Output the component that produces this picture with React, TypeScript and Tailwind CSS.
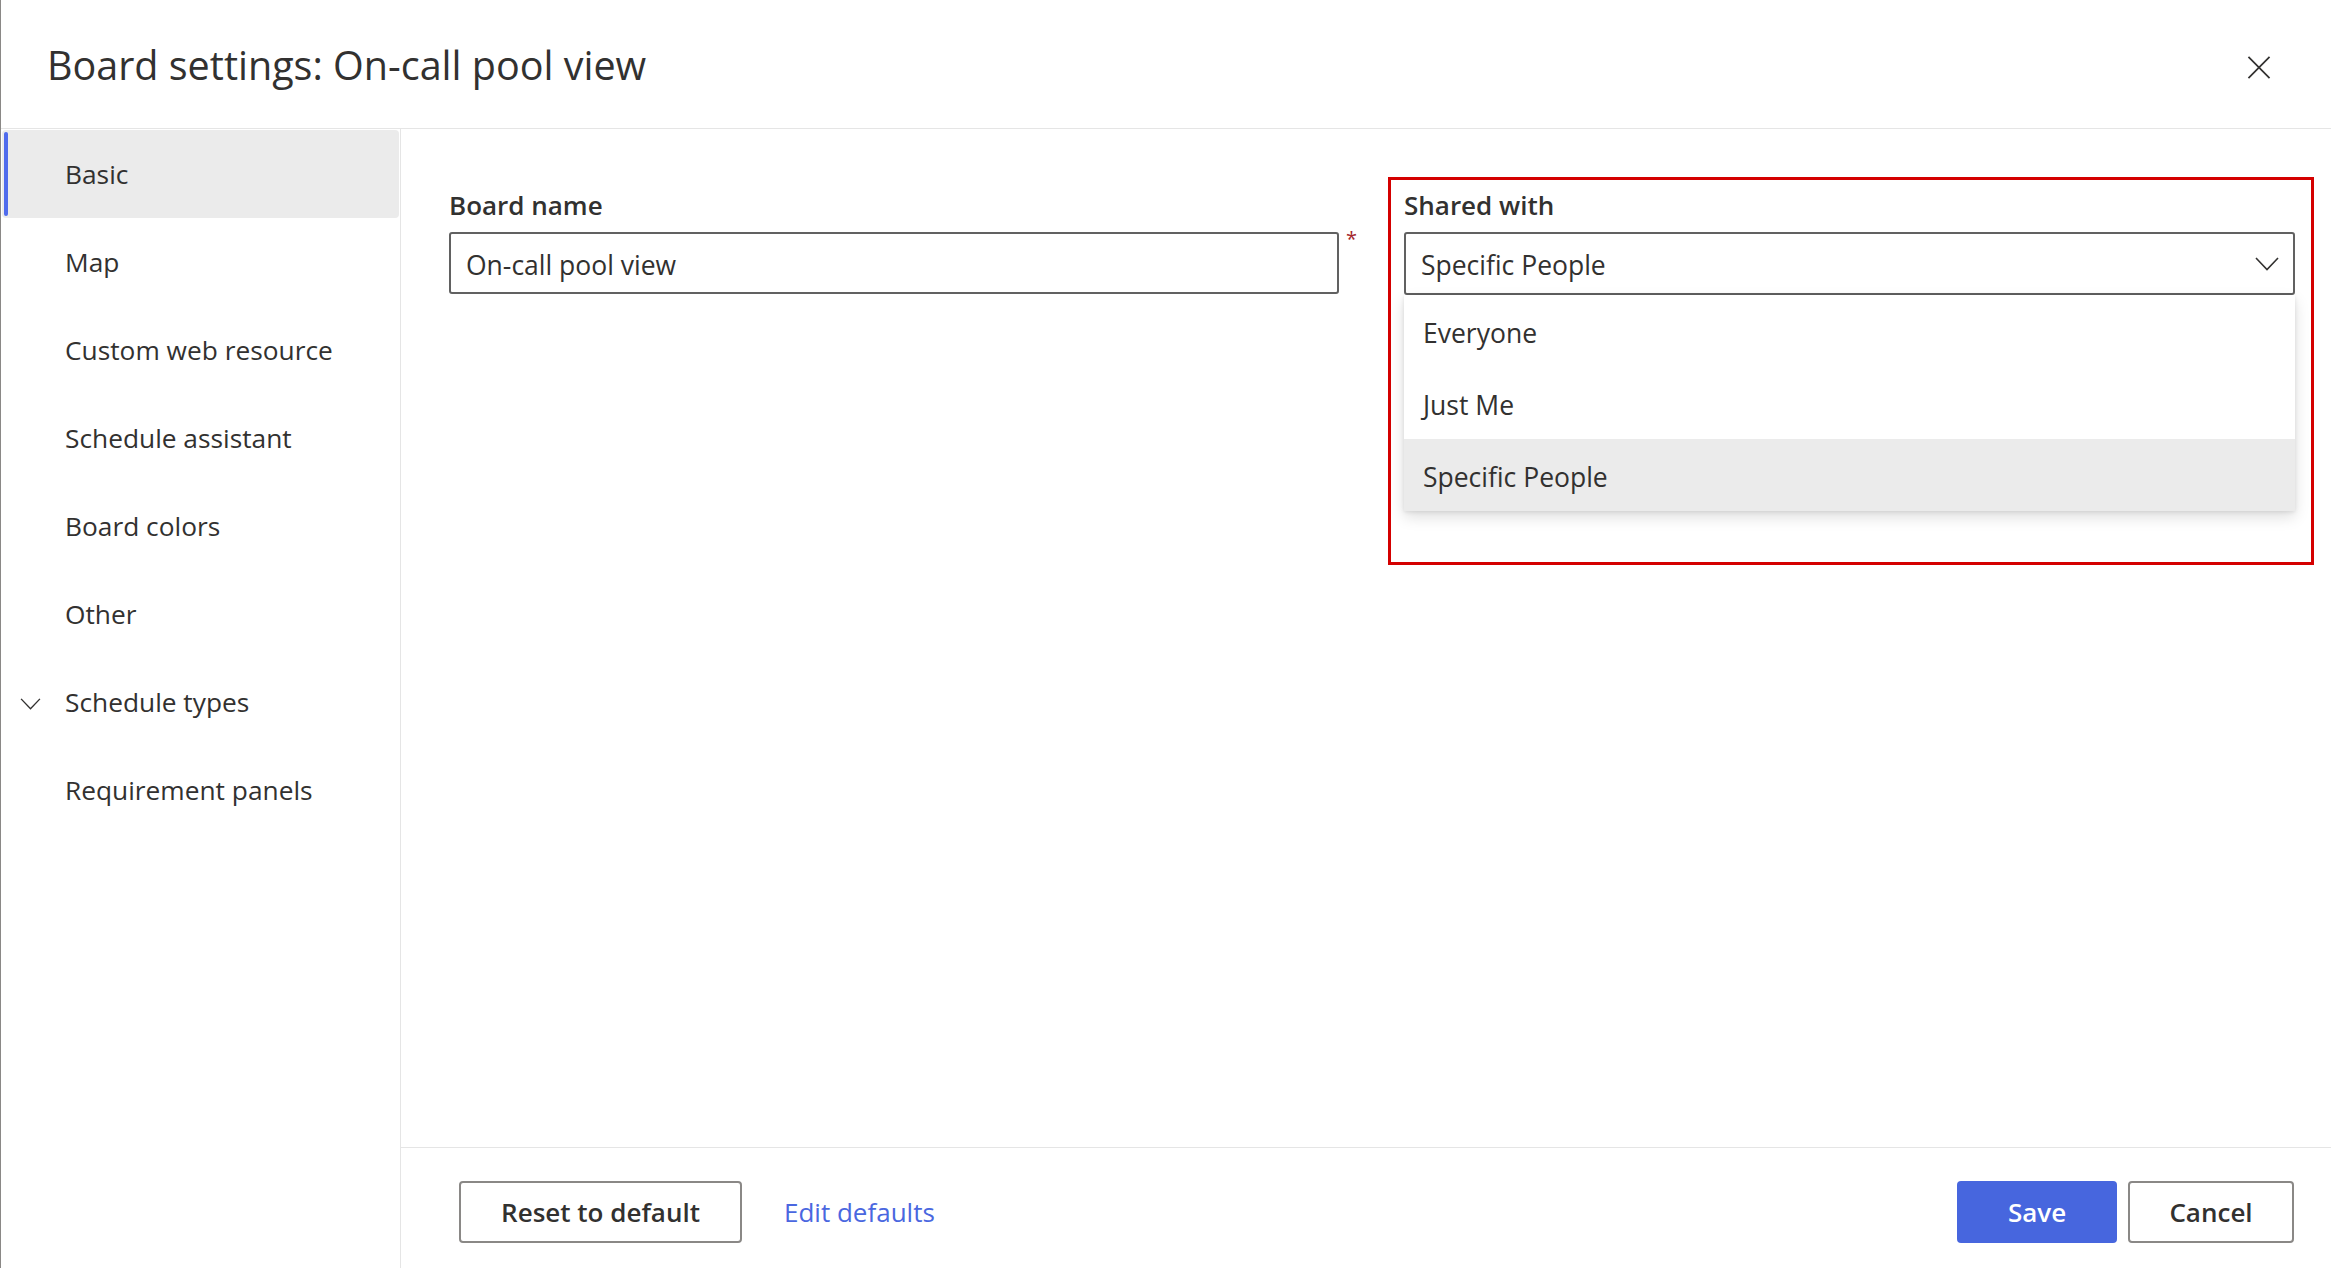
import React from 'react';

const navItems = [
  { label: 'Basic', active: true },
  { label: 'Map' },
  { label: 'Custom web resource' },
  { label: 'Schedule assistant' },
  { label: 'Board colors' },
  { label: 'Other' },
  { label: 'Schedule types', expandable: true },
  { label: 'Requirement panels' },
];

const shareOptions = ['Everyone', 'Just Me', 'Specific People'];

const Chevron = ({ className }: { className?: string }) => (
  <svg className={className} viewBox="0 0 24 14" fill="none">
    <path d="M1 1 L12 12.5 L23 1" stroke="#323130" strokeWidth="1.6" strokeLinejoin="miter" />
  </svg>
);

export default function App() {
  return (
    <div className="w-[2331px] h-[1268px] flex flex-col bg-white border-l border-[#8a8886] text-[#323130] font-['Segoe_UI','Open_Sans',sans-serif] overflow-hidden">
      {/* Header */}
      <div className="h-[129px] shrink-0 border-b border-[#e5e5e5] flex items-center justify-between pl-[46px] pr-[60px]">
        <h1 className="mt-[3px] text-[39.5px] font-medium leading-none">Board settings: On-call pool view</h1>
        <button className="mt-[6px] w-[24px] h-[24px] flex items-center justify-center">
          <svg viewBox="0 0 24 24" className="w-[24px] h-[23px]" fill="none">
            <path d="M1 1 L23 23 M23 1 L1 23" stroke="#323130" strokeWidth="1.8" />
          </svg>
        </button>
      </div>

      <div className="flex flex-1 min-h-0">
        {/* Sidebar */}
        <nav className="w-[400px] shrink-0 border-r border-[#e5e5e5] pt-px pl-[1px] pr-[1px]">
          {navItems.map((item) => (
            <div
              key={item.label}
              className={`relative h-[88px] flex items-center rounded-[4px] ${item.active ? 'bg-[#ebebeb]' : ''}`}
            >
              {item.active && (
                <span className="absolute left-[2px] top-[2px] bottom-[2px] w-[4px] rounded-[2px] bg-[#4f6bed]" />
              )}
              <div className="w-[63px] shrink-0 flex pl-[18px] pt-[3px]">
                {item.expandable && <Chevron className="w-[21px] h-[12px]" />}
              </div>
              <span className="text-[26.3px] leading-none">{item.label}</span>
            </div>
          ))}
        </nav>

        {/* Main */}
        <div className="flex-1 flex flex-col min-w-0">
          <div className="flex-1 flex items-start pl-[48px] pr-[17px] pt-[48px]">
            <div className="w-[890px] shrink-0 pt-[10px]">
              <label className="block text-[26px] font-semibold leading-[36px] mb-[9px]">Board name</label>
              <div className="h-[62px] border-2 border-[#616161] rounded-[3px] flex items-center px-[15px] pt-[5px] text-[26.5px]">
                On-call pool view
              </div>
            </div>
            <div className="w-[49px] shrink-0 pt-[52px] pl-[7px] text-[20px] leading-none text-[#a4262c]">*</div>
            <div className="flex-1 border-[3px] border-[#d40000] pl-[13px] pr-[16px] pt-[7px] pb-[51px]">
              <label className="block text-[26px] font-semibold leading-[36px] mb-[9px]">Shared with</label>
              <div className="h-[63px] border-2 border-[#616161] rounded-[3px] flex items-center justify-between pl-[15px] pr-[14px] text-[26.5px]">
                <span className="pt-[4px]">Specific People</span>
                <Chevron className="w-[24px] h-[14px]" />
              </div>
              <div className="bg-white shadow-[0_6px_14px_rgba(0,0,0,0.13),0_1px_4px_rgba(0,0,0,0.1)]">
                {shareOptions.map((opt) => (
                  <div
                    key={opt}
                    className={`h-[72px] flex items-center pl-[19px] pt-[5px] text-[26.5px] ${opt === 'Specific People' ? 'bg-[#ebebeb]' : ''}`}
                  >
                    {opt}
                  </div>
                ))}
              </div>
            </div>
          </div>

          {/* Footer */}
          <div className="h-[121px] shrink-0 border-t border-[#e5e5e5] flex items-start justify-between pt-[33px] pl-[58px] pr-[37px]">
            <div className="flex items-center">
              <button className="w-[283px] h-[62px] border-2 border-[#8a8886] rounded-[4px] text-[26px] font-semibold">
                Reset to default
              </button>
              <a className="ml-[42px] text-[26px] text-[#4a67e0]">Edit defaults</a>
            </div>
            <div className="flex items-center gap-[11px]">
              <button className="w-[160px] h-[62px] rounded-[4px] bg-[#4766de] text-white text-[26px] font-semibold">
                Save
              </button>
              <button className="w-[166px] h-[62px] border-2 border-[#8a8886] rounded-[4px] text-[26px] font-semibold">
                Cancel
              </button>
            </div>
          </div>
        </div>
      </div>
    </div>
  );
}
